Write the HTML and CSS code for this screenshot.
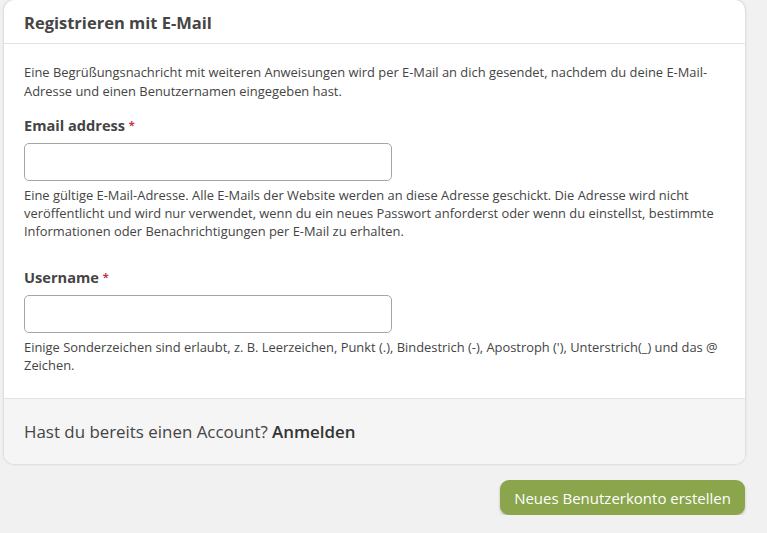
FILE: index.html
```html
<!DOCTYPE html>
<html lang="de">
<head>
  <meta charset="UTF-8">
  <title>Registrieren</title>
  <link rel="stylesheet" href="styles.css">
</head>
<body>
  <form class="register">
    <div class="card">
      <div class="card-header">Registrieren mit E-Mail</div>
      <div class="card-body">
        <p class="intro">Eine Begrüßungsnachricht mit weiteren Anweisungen wird per E-Mail an dich gesendet, nachdem du deine E-Mail-Adresse und einen Benutzernamen eingegeben hast.</p>

        <div class="field">
          <label for="mail">Email address <span class="req">*</span></label>
          <input id="mail" type="email">
          <div class="help">Eine gültige E-Mail-Adresse. Alle E-Mails der Website werden an diese Adresse geschickt. Die Adresse wird nicht veröffentlicht und wird nur verwendet, wenn du ein neues Passwort anforderst oder wenn du einstellst, bestimmte Informationen oder Benachrichtigungen per E-Mail zu erhalten.</div>
        </div>

        <div class="field">
          <label for="name">Username <span class="req">*</span></label>
          <input id="name" type="text">
          <div class="help">Einige Sonderzeichen sind erlaubt, z. B. Leerzeichen, Punkt (.), Bindestrich (-), Apostroph ('), Unterstrich(_) und das @ Zeichen.</div>
        </div>
      </div>
      <div class="card-footer">Hast du bereits einen Account? <a href="#">Anmelden</a></div>
    </div>

    <div class="actions">
      <button type="submit" class="btn">Neues Benutzerkonto erstellen</button>
    </div>
  </form>
</body>
</html>
```

FILE: styles.css
```css
body {
  margin: 0;
  background: #f1f1f1;
  font-family: 'Open Sans', sans-serif;
  color: #444;
}

.register {
  padding: 0 22px 0 4px;
}

.card {
  background: #fff;
  border-radius: 10px;
  box-shadow: 0 0 3px rgba(0, 0, 0, 0.2);
  overflow: hidden;
}

.card-header {
  height: 43px;
  line-height: 46px;
  padding: 0 20px;
  font-size: 16.5px;
  font-weight: 700;
  color: #454545;
  border-bottom: 1px solid #e3e3e3;
}

.card-body {
  padding: 19px 20px 24px;
}

.intro {
  margin: 0 0 12px;
  font-size: 12.9px;
  line-height: 19px;
}

.field {
  margin-bottom: 25px;
}

.field:last-child {
  margin-bottom: 0;
}

.field label {
  display: block;
  font-size: 14.6px;
  font-weight: 700;
  line-height: 24px;
  margin-bottom: 6px;
}

.req {
  color: #c8314a;
  font-size: 11px;
  vertical-align: top;
}

.field input {
  display: block;
  box-sizing: border-box;
  width: 368px;
  height: 38px;
  border: 1px solid #a5a5a5;
  border-radius: 5px;
  margin: 0 0 5px;
}

.help {
  font-size: 12.9px;
  line-height: 18px;
}

.card-footer {
  background: #f5f5f5;
  border-top: 1px solid #e3e3e3;
  height: 65px;
  line-height: 65px;
  padding: 0 20px;
  font-size: 16.9px;
}

.card-footer a {
  color: #333;
  font-weight: 600;
  text-decoration: none;
}

.actions {
  display: flex;
  justify-content: flex-end;
  padding-top: 16px;
}

.btn {
  background: #8aa54b;
  color: #fff;
  border: none;
  border-radius: 9px;
  height: 35px;
  padding: 0 14px;
  font-family: inherit;
  font-size: 15px;
  box-shadow: 0 2px 3px rgba(0, 0, 0, 0.2);
}
```
